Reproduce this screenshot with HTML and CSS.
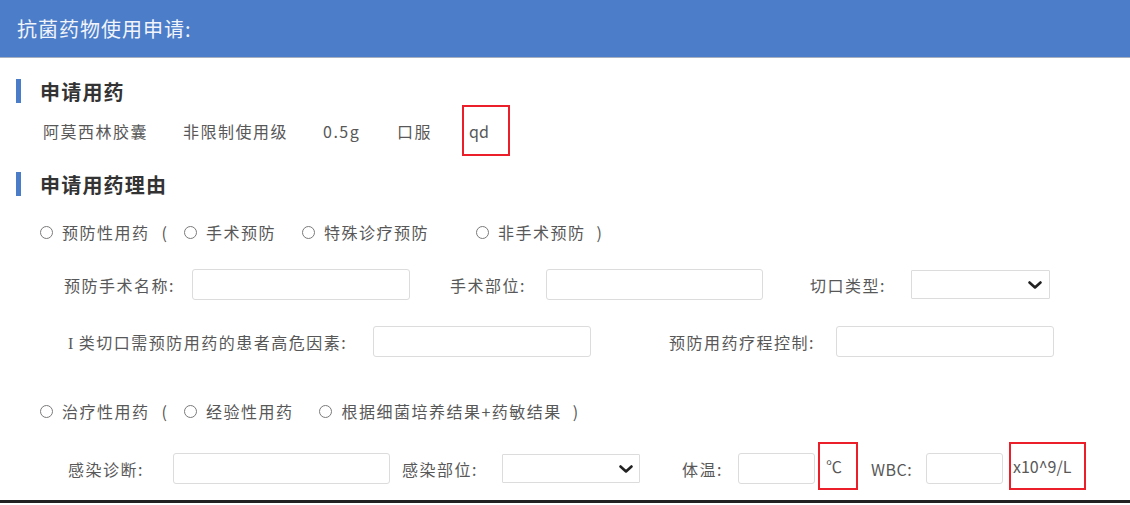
FILE: index.html
```html
<!DOCTYPE html>
<html lang="zh-CN">
<head>
  <meta charset="UTF-8">
  <meta name="viewport" content="width=device-width, initial-scale=1">
  <title>抗菌药物使用申请</title>
  <link rel="stylesheet" href="styles.css">
</head>
<body>
  <header class="page-header">
    <h1>抗菌药物使用申请:</h1>
  </header>

  <main class="content">
    <!-- 申请用药 -->
    <h2 class="section-title">申请用药</h2>
    <div class="drug-row">
      <span class="drug-name">阿莫西林胶囊</span>
      <span class="drug-level">非限制使用级</span>
      <span class="drug-dose">0.5g</span>
      <span class="drug-route">口服</span>
      <span class="mark mark-freq">qd</span>
    </div>

    <!-- 申请用药理由 -->
    <h2 class="section-title section-reason">申请用药理由</h2>

    <div class="radio-row">
      <label class="radio"><input type="radio" name="reason"><span>预防性用药</span></label>
      <span class="paren paren-open">(</span>
      <label class="radio"><input type="radio" name="prevent"><span>手术预防</span></label>
      <label class="radio radio-next"><input type="radio" name="prevent"><span>特殊诊疗预防</span></label>
      <label class="radio radio-wide"><input type="radio" name="prevent"><span>非手术预防</span></label>
      <span class="paren paren-close">)</span>
    </div>

    <div class="form-row row-prevent">
      <div class="field f-op-name">
        <span class="field-label">预防手术名称:</span>
        <input class="text-input" type="text">
      </div>
      <div class="field f-op-site">
        <span class="field-label">手术部位:</span>
        <input class="text-input" type="text">
      </div>
      <div class="field f-incision">
        <span class="field-label">切口类型:</span>
        <div class="select-box">
          <select></select>
          <svg class="chevron" viewBox="0 0 14 8" width="14" height="8"><path d="M1.5 1.5 L7 6.5 L12.5 1.5" fill="none" stroke="#222" stroke-width="2.6" stroke-linecap="round" stroke-linejoin="round"/></svg>
        </div>
      </div>
    </div>

    <div class="form-row row-risk">
      <div class="field f-risk">
        <span class="field-label"><span class="roman">I</span>类切口需预防用药的患者高危因素:</span>
        <input class="text-input" type="text">
      </div>
      <div class="field f-course">
        <span class="field-label">预防用药疗程控制:</span>
        <input class="text-input" type="text">
      </div>
    </div>

    <div class="radio-row radio-row-treat">
      <label class="radio"><input type="radio" name="reason"><span>治疗性用药</span></label>
      <span class="paren paren-open">(</span>
      <label class="radio"><input type="radio" name="treat"><span>经验性用药</span></label>
      <label class="radio radio-next"><input type="radio" name="treat"><span>根据细菌培养结果+药敏结果</span></label>
      <span class="paren paren-close">)</span>
    </div>

    <div class="form-row row-treat">
      <div class="field f-diagnosis">
        <span class="field-label">感染诊断:</span>
        <input class="text-input" type="text">
      </div>
      <div class="field f-site">
        <span class="field-label">感染部位:</span>
        <div class="select-box">
          <select></select>
          <svg class="chevron" viewBox="0 0 14 8" width="14" height="8"><path d="M1.5 1.5 L7 6.5 L12.5 1.5" fill="none" stroke="#222" stroke-width="2.6" stroke-linecap="round" stroke-linejoin="round"/></svg>
        </div>
      </div>
      <div class="field f-temp">
        <span class="field-label">体温:</span>
        <input class="text-input" type="text">
      </div>
      <span class="mark mark-temp">℃</span>
      <div class="field f-wbc">
        <span class="field-label">WBC:</span>
        <input class="text-input" type="text">
      </div>
      <span class="mark mark-wbc">x10^9/L</span>
    </div>
  </main>

  <div class="page-bottom"></div>
</body>
</html>
```

FILE: styles.css
```css
/* Reset */
*, *::before, *::after { margin: 0; padding: 0; box-sizing: border-box; }
body {
  font-family: "Noto Sans CJK SC", "Microsoft YaHei", sans-serif;
  font-size: 16px;
  letter-spacing: 1.5px;
  color: #585858;
  background: #fff;
  overflow: hidden;
}
/* Header bar */
.page-header {
  height: 58px;
  background: #4b7dc9;
  border-bottom: 1px solid #a7b0bf;
  display: flex;
  align-items: center;
  padding-left: 17px;
}
.page-header h1 {
  font-size: 20px;
  font-weight: normal;
  letter-spacing: 1px;
  color: #f1f4fa;
}
/* Section titles */
.section-title {
  display: flex;
  align-items: center;
  height: 26px;
  margin-top: 20px;
  padding-left: 16px;
  font-size: 20px;
  font-weight: bold;
  letter-spacing: 1.2px;
  color: #333;
}
.section-title::before {
  content: "";
  width: 5px;
  height: 24px;
  margin-right: 19px;
  background: #4a7cc8;
}
.section-reason { margin-top: 15px; }
/* Drug row */
.drug-row {
  display: flex;
  align-items: center;
  height: 51px;
  margin-top: 1px;
  padding-left: 43px;
}
.drug-name, .drug-level { width: 140px; }
.drug-dose { width: 74px; }
.drug-route { width: 65px; }
/* Red highlight boxes */
.mark {
  display: flex;
  align-items: center;
  border: 2px solid #ea1f2a;
  letter-spacing: 0;
}
.mark-freq {
  width: 48px;
  height: 51px;
  padding-left: 5px;
}
/* Radio rows */
.radio-row {
  display: flex;
  align-items: center;
  height: 30px;
  margin-top: 20px;
  padding-left: 40px;
}
.radio-row-treat { margin-top: 39px; }
.radio {
  display: flex;
  align-items: center;
}
.radio input {
  appearance: none;
  width: 13px;
  height: 13px;
  margin-right: 9px;
  border: 1px solid #7a7a7a;
  border-radius: 50%;
  background: #fff;
}
.paren { letter-spacing: 0; }
.paren-open { margin: 0 17px 0 12px; }
.paren-close { margin-left: 11px; }
.radio-next { margin-left: 26px; }
.radio-wide { margin-left: 47px; }
/* Form rows */
.form-row {
  display: flex;
  align-items: center;
  height: 31px;
  margin-top: 22px;
  padding-left: 64px;
}
.row-risk { margin-top: 26px; }
.row-treat {
  margin-top: 27px;
  padding-left: 68px;
}
.field {
  display: flex;
  align-items: center;
}
.field-label { flex-shrink: 0; white-space: nowrap; }
.roman {
  font-family: "Liberation Serif", serif;
  margin: 0 4px 0 4px;
}
.text-input {
  height: 31px;
  border: 1px solid #dcdcdc;
  border-radius: 3px;
  background: #fff;
  outline: none;
}
.select-box {
  position: relative;
  height: 29px;
}
.select-box select {
  appearance: none;
  width: 100%;
  height: 100%;
  border: 1px solid #dcdcdc;
  border-radius: 1px;
  background: #fff;
}
.chevron {
  position: absolute;
  top: 11px;
  right: 8px;
}
/* Field sizes */
.f-op-name .field-label { width: 128px; }
.f-op-name .text-input { width: 218px; }
.f-op-site { margin-left: 40px; }
.f-op-site .field-label { width: 96px; }
.f-op-site .text-input { width: 217px; }
.f-incision { margin-left: 47px; }
.f-incision .field-label { width: 101px; }
.f-incision .select-box { width: 139px; }

.f-risk .field-label { width: 309px; }
.f-risk .text-input { width: 218px; }
.f-course { margin-left: 78px; }
.f-course .field-label { width: 167px; }
.f-course .text-input { width: 218px; }

.f-diagnosis .field-label { width: 105px; }
.f-diagnosis .text-input { width: 217px; }
.f-site { margin-left: 12px; }
.f-site .field-label { width: 100px; }
.f-site .select-box { width: 138px; }
.f-site .chevron { right: 7px; }
.f-temp { margin-left: 42px; }
.f-temp .field-label { width: 56px; }
.f-temp .text-input { width: 77px; }
.mark-temp {
  width: 40px;
  height: 48px;
  margin: -11px 0 -6px 3px;
  padding-left: 6px;
}
.f-wbc { margin-left: 13px; }
.f-wbc .field-label { width: 55px; letter-spacing: 0.5px; }
.f-wbc .text-input { width: 77px; }
.mark-wbc {
  width: 77px;
  height: 48px;
  margin: -11px 0 -6px 6px;
  padding-left: 2px;
}
/* Bottom rule */
.page-bottom {
  margin-top: 16px;
  border-top: 3px solid #222;
}
```
